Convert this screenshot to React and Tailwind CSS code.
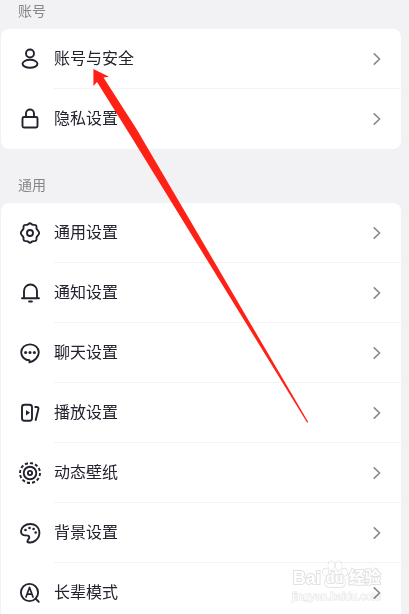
const iconProps = {
  viewBox: '0 0 24 24',
  fill: 'none',
  stroke: 'currentColor',
  strokeWidth: 1.9,
  strokeLinecap: 'round',
  strokeLinejoin: 'round',
  className: 'h-6 w-6 shrink-0 text-[#22232e]',
  'aria-hidden': true,
};

const UserIcon = () => (
  <svg {...iconProps}>
    <circle cx="12" cy="6.500" r="4" />
    <ellipse cx="12" cy="16.800" rx="7.500" ry="4" />
  </svg>
);

const LockIcon = () => (
  <svg {...iconProps}>
    <rect x="4.500" y="10" width="15" height="10.500" rx="1.500" />
    <path d="M8 10V6.500a4 4 0 0 1 8 0V10" />
  </svg>
);

const GearIcon = () => (
  <svg {...iconProps}>
    <path d="M9.600 3.700c1-.5 1.300-1.500 2.400-1.500s1.400 1 2.400 1.500c1.100.5 2.700-.2 3.600.7s.2 2.500.7 3.600c.5 1 2.500 2.400 2.500 4s-2 3-2.500 4c-.5 1.100.2 2.700-.7 3.600s-2.500.2-3.600.7c-1 .5-1.300 1.500-2.400 1.500s-1.400-1-2.400-1.500c-1.100-.5-2.700.2-3.600-.7s-.2-2.500-.7-3.600c-.5-1-2.500-2.400-2.500-4s2-3 2.500-4c.5-1.100-.2-2.700.7-3.600s2.500-.2 3.600-.7Z" />
    <circle cx="12" cy="12" r="3" />
  </svg>
);

const BellIcon = () => (
  <svg {...iconProps}>
    <path d="M4 17.300h17" />
    <path d="M6 17V10a6.500 6.500 0 0 1 13 0V17" />
    <path d="M11.200 20.500h2.600" strokeWidth="2.200" />
  </svg>
);

const ChatIcon = () => (
  <svg {...iconProps}>
    <path d="M12 3.400c-5 0-8.800 3.400-8.800 7.900s3.800 7.900 8.300 8v2.100c4.800-1.300 9.300-5.100 9.300-10.100 0-4.500-3.800-7.900-8.800-7.900Z" />
    <g fill="currentColor" stroke="none">
      <circle cx="7.600" cy="11.500" r="1.500" />
      <circle cx="12" cy="11.500" r="1.500" />
      <circle cx="16.400" cy="11.500" r="1.500" />
    </g>
  </svg>
);

const PlayIcon = () => (
  <svg {...iconProps}>
    <rect x="4" y="3.800" width="10" height="16" rx="2.500" />
    <path d="M8 9v5.400l4-2.700Z" fill="currentColor" stroke="none" />
    <path d="M17.300 6h1.500c1.300 0 1.900.8 1.600 2l-2.700 11" />
  </svg>
);

const WallpaperIcon = () => (
  <svg {...iconProps}>
    <circle cx="12" cy="12" r="10" pathLength="120" strokeDasharray="6 4" strokeLinecap="butt" />
    <circle cx="12" cy="12" r="6.300" />
    <circle cx="12" cy="12" r="2.100" />
  </svg>
);

const PaletteIcon = () => (
  <svg {...iconProps}>
    <path d="M9.500 21c2.200.8 5.500.5 8-1.500 3-2.300 4.300-5.500 3.800-9C20.600 6 17 3 12.500 3 7 3 3 6.500 3 10.500c0 2.300 1.800 4 4.200 3.900 2-.1 3.700.2 4.100 1.600.6 2-2.800 3-1.800 5Z" />
    <g fill="currentColor" stroke="none">
      <circle cx="7.500" cy="9" r="1.300" />
      <circle cx="11.500" cy="7" r="1.300" />
      <circle cx="15.600" cy="8" r="1.300" />
      <circle cx="17.700" cy="11.500" r="1.300" />
    </g>
  </svg>
);

const ElderIcon = () => (
  <svg {...iconProps}>
    <circle cx="11.500" cy="11.500" r="8.600" />
    <path d="m17.500 17.500 3.300 3.300" />
    <path d="m8 16 3.500-9.500L15 16M9.200 13.200h4.600" strokeWidth="1.700" />
  </svg>
);

const ChevronIcon = () => (
  <svg
    viewBox="0 0 8 14"
    fill="none"
    stroke="#8b8b90"
    strokeWidth="1.700"
    strokeLinecap="round"
    strokeLinejoin="round"
    className="h-3.5 w-2 shrink-0"
    aria-hidden="true"
  >
    <path d="m1.300 1.800 5.300 5.200-5.300 5.200" />
  </svg>
);

const sections = [
  {
    title: '账号',
    items: [
      { label: '账号与安全', Icon: UserIcon },
      { label: '隐私设置', Icon: LockIcon },
    ],
  },
  {
    title: '通用',
    items: [
      { label: '通用设置', Icon: GearIcon },
      { label: '通知设置', Icon: BellIcon },
      { label: '聊天设置', Icon: ChatIcon },
      { label: '播放设置', Icon: PlayIcon },
      { label: '动态壁纸', Icon: WallpaperIcon },
      { label: '背景设置', Icon: PaletteIcon },
      { label: '长辈模式', Icon: ElderIcon },
    ],
  },
];

const SettingsRow = ({ label, Icon }) => (
  <li className="group">
    <button type="button" className="flex h-15 w-full items-center gap-3 pl-[17px] text-left">
      <Icon />
      <span className="flex h-full flex-1 items-center justify-between border-b border-[#f3f3f4] pr-5 group-last:border-transparent">
        <span className="text-base text-[#22232e]">{label}</span>
        <ChevronIcon />
      </span>
    </button>
  </li>
);

const SettingsSection = ({ title, items }) => (
  <section>
    <h2 className="px-[17px] pb-2 text-sm leading-5 text-[#85868b]">{title}</h2>
    <ul className="overflow-hidden rounded-lg bg-white">
      {items.map((item) => (
        <SettingsRow key={item.label} {...item} />
      ))}
    </ul>
  </section>
);

// Red pointer from the middle of the list to the first row
const Arrow = () => (
  <svg
    width="216"
    height="356"
    viewBox="0 0 216 356"
    className="pointer-events-none absolute top-[68px] left-[93px]"
    aria-hidden="true"
  >
    <path d="M.4 1 16 8.700l-5.500.8L43.500 61l171.700 293-1 .8L39 70 4 14 .4 18Z" fill="#ff2116" />
  </svg>
);

const Watermark = () => (
  <div className="pointer-events-none absolute right-7 bottom-2.5 flex flex-col items-center text-white mix-blend-multiply">
    <div className="flex items-end text-lg leading-5 font-bold [paint-order:stroke_fill] [-webkit-text-stroke:2px_#e2e2e2]">
      <span>Bai</span>
      <span className="relative flex h-7 w-7 items-end justify-center">
        <svg
          viewBox="0 0 28 30"
          className="absolute inset-0 h-full w-full"
          fill="#fff"
          stroke="#dcdcdc"
          strokeWidth="1.200"
          aria-hidden="true"
        >
          <ellipse cx="4" cy="13" rx="3" ry="4" />
          <ellipse cx="10" cy="6" rx="3.300" ry="4.800" />
          <ellipse cx="18" cy="6" rx="3.300" ry="4.800" />
          <ellipse cx="24" cy="13" rx="3" ry="4" />
          <path d="M14 11.500c-3 0-4 3-6 5s-5 4-5 7.500 3 5 6 5h10c3 0 6-1.500 6-5s-3-5.500-5-7.500-3-5-6-5Z" />
        </svg>
        <span className="relative text-sm leading-5">du</span>
      </span>
      <span className="text-base leading-5">经验</span>
    </div>
    <span className="text-[11px] leading-4 [paint-order:stroke_fill] [-webkit-text-stroke:1px_#e2e2e2]">
      jingyan.baidu.com
    </span>
  </div>
);

const App = () => {
  return (
    <main className="relative h-screen overflow-hidden bg-[#f2f2f4] pt-px pr-2 pl-px font-['Liberation_Sans','Noto_Sans_CJK_SC',sans-serif]">
      <div className="flex flex-col gap-[26px]">
        {sections.map((section) => (
          <SettingsSection key={section.title} {...section} />
        ))}
      </div>
      <Arrow />
      <Watermark />
    </main>
  );
};

export default App;
